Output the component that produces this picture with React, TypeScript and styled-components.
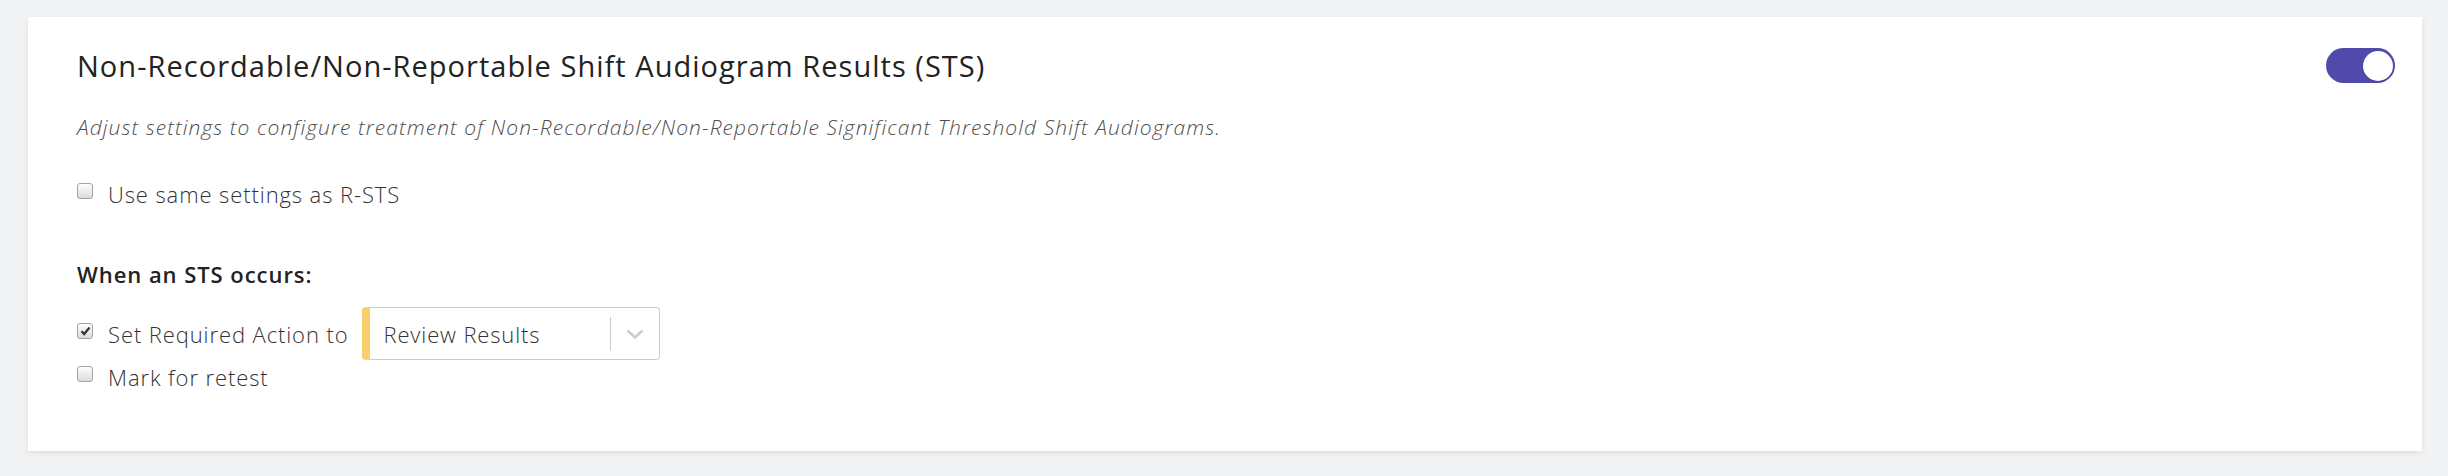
import styled, { createGlobalStyle } from "styled-components";

const GlobalStyle = createGlobalStyle`
  html, body {
    margin: 0;
    padding: 0;
    background: #f2f3f5;
  }
  body {
    font-family: "Open Sans", "Liberation Sans", sans-serif;
    color: #333;
  }
`;

const Page = styled.div`
  padding: 17px 26px 24px 28px;
`;

const Card = styled.section`
  background: #fff;
  box-shadow: 0 2px 6px rgba(0, 0, 0, 0.09);
  padding: 29.5px 27px 59.5px 49px;
`;

const Header = styled.div`
  display: flex;
  align-items: center;
  justify-content: space-between;
`;

const Title = styled.h2`
  margin: 0;
  font-size: 29px;
  line-height: 38px;
  font-weight: 400;
  letter-spacing: 1.03px;
  color: #222;
`;

const Toggle = styled.button<{ $on?: boolean }>`
  position: relative;
  width: 69px;
  height: 35px;
  border: none;
  border-radius: 18px;
  padding: 0;
  background: ${(p) => (p.$on ? "#524aab" : "#ccc")};
  cursor: pointer;
  flex-shrink: 0;

  &::after {
    content: "";
    position: absolute;
    top: 2.5px;
    left: ${(p) => (p.$on ? "36.5px" : "2.5px")};
    width: 30px;
    height: 30px;
    border-radius: 50%;
    background: #fff;
    box-shadow: 0 1px 2px rgba(0, 0, 0, 0.15);
  }
`;

const Description = styled.p`
  margin: 27px 0 0;
  font-size: 21px;
  line-height: 30px;
  font-style: italic;
  font-weight: 300;
  letter-spacing: 1.07px;
  color: #4f4f4f;
`;

const Row = styled.label<{ $mt?: number }>`
  display: flex;
  align-items: center;
  margin-top: ${(p) => p.$mt ?? 0}px;
  font-size: 22px;
  line-height: 30px;
  font-weight: 300;
  letter-spacing: 0.9px;
  color: #333;
`;

const Box = styled.span`
  width: 16px;
  height: 16px;
  margin: 0 15px 0 0;
  border: 1px solid #a3a3a3;
  border-radius: 3px;
  background: linear-gradient(#fdfdfd, #dcdcdc);
  box-sizing: border-box;
  display: flex;
  align-items: center;
  justify-content: center;
  position: relative;
  top: -2.5px;
  flex-shrink: 0;
`;

const SectionLabel = styled.h3`
  margin: 50.5px 0 0;
  font-size: 22px;
  line-height: 30px;
  font-weight: 600;
  letter-spacing: 0.95px;
  color: #222;
`;

const Select = styled.div`
  display: flex;
  align-items: center;
  width: 298px;
  height: 53px;
  margin-left: 13px;
  box-sizing: border-box;
  border: 1px solid #ccc;
  border-left: 8px solid #f8cf6b;
  border-radius: 4px;
  background: #fff;
`;

const SelectValue = styled.span`
  flex: 1;
  padding-left: 14px;
  font-size: 22px;
  font-weight: 300;
  letter-spacing: 0.85px;
  color: #333;
`;

const Separator = styled.span`
  width: 1px;
  height: 34px;
  background: #ccc;
`;

const Arrow = styled.span`
  width: 48px;
  display: flex;
  align-items: center;
  justify-content: center;
`;

const Checkbox = ({ checked }: { checked?: boolean }) => (
  <Box>
    {checked && (
      <svg width="11" height="10" viewBox="0 0 11 10">
        <path d="M1.5 5.2 L4.2 8 L9.5 1.5" fill="none" stroke="#333" strokeWidth="2.2" />
      </svg>
    )}
  </Box>
);

export default function App() {
  return (
    <>
      <GlobalStyle />
      <Page>
        <Card>
          <Header>
            <Title>Non-Recordable/Non-Reportable Shift Audiogram Results (STS)</Title>
            <Toggle $on aria-label="Enabled" />
          </Header>
          <Description>
            Adjust settings to configure treatment of Non-Recordable/Non-Reportable Significant
            Threshold Shift Audiograms.
          </Description>
          <Row $mt={37}>
            <Checkbox />
            Use same settings as R-STS
          </Row>
          <SectionLabel>When an STS occurs:</SectionLabel>
          <Row $mt={18}>
            <Checkbox checked />
            Set Required Action to
            <Select>
              <SelectValue>Review Results</SelectValue>
              <Separator />
              <Arrow>
                <svg width="18" height="10" viewBox="0 0 18 10">
                  <path d="M1.5 1.5 L9 8.5 L16.5 1.5" fill="none" stroke="#ccc" strokeWidth="2.5" />
                </svg>
              </Arrow>
            </Select>
          </Row>
          <Row $mt={1.5}>
            <Checkbox />
            Mark for retest
          </Row>
        </Card>
      </Page>
    </>
  );
}
